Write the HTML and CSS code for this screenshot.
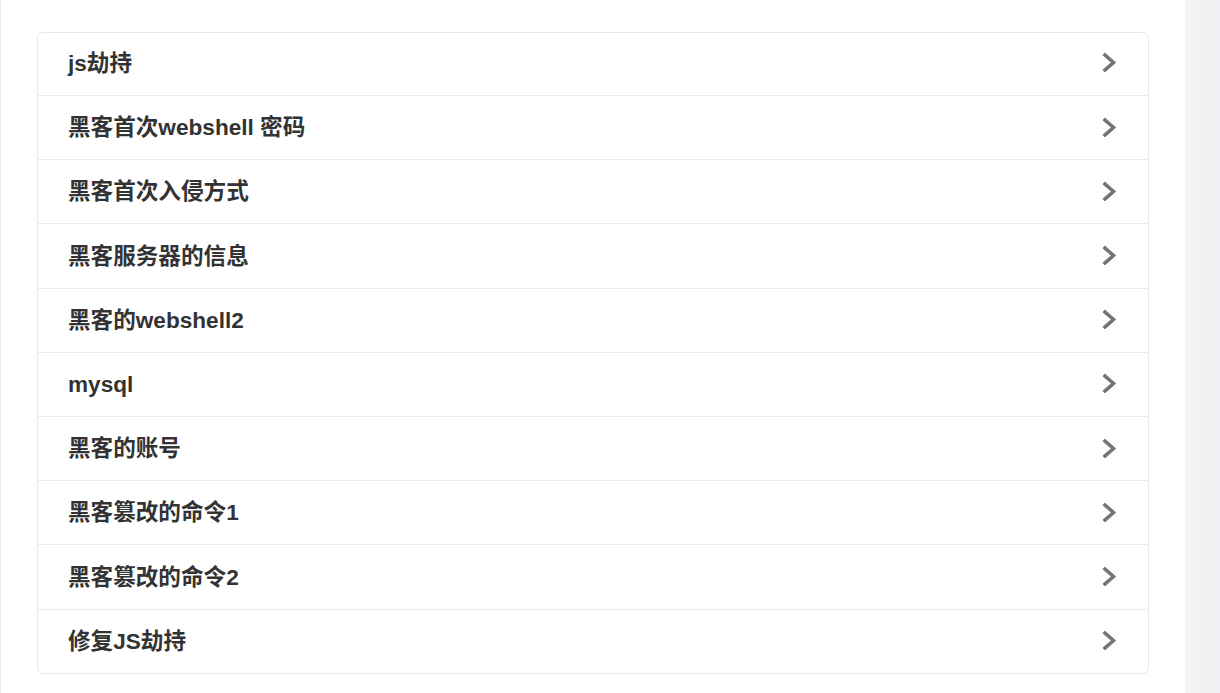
FILE: index.html
```html
<!DOCTYPE html>
<html lang="zh-CN">
<head>
<meta charset="utf-8">
<title>列表</title>
<link rel="stylesheet" href="styles.css">
</head>
<body>
<div class="page">
  <main class="main">
    <ul class="card">
      <li class="row"><span class="label">js劫持</span><svg class="chev" viewBox="0 0 18 20"><polyline points="4,3 12.5,10.5 4,18"/></svg></li>
      <li class="row"><span class="label">黑客首次webshell 密码</span><svg class="chev" viewBox="0 0 18 20"><polyline points="4,3 12.5,10.5 4,18"/></svg></li>
      <li class="row"><span class="label">黑客首次入侵方式</span><svg class="chev" viewBox="0 0 18 20"><polyline points="4,3 12.5,10.5 4,18"/></svg></li>
      <li class="row"><span class="label">黑客服务器的信息</span><svg class="chev" viewBox="0 0 18 20"><polyline points="4,3 12.5,10.5 4,18"/></svg></li>
      <li class="row"><span class="label">黑客的webshell2</span><svg class="chev" viewBox="0 0 18 20"><polyline points="4,3 12.5,10.5 4,18"/></svg></li>
      <li class="row"><span class="label">mysql</span><svg class="chev" viewBox="0 0 18 20"><polyline points="4,3 12.5,10.5 4,18"/></svg></li>
      <li class="row"><span class="label">黑客的账号</span><svg class="chev" viewBox="0 0 18 20"><polyline points="4,3 12.5,10.5 4,18"/></svg></li>
      <li class="row"><span class="label">黑客篡改的命令1</span><svg class="chev" viewBox="0 0 18 20"><polyline points="4,3 12.5,10.5 4,18"/></svg></li>
      <li class="row"><span class="label">黑客篡改的命令2</span><svg class="chev" viewBox="0 0 18 20"><polyline points="4,3 12.5,10.5 4,18"/></svg></li>
      <li class="row"><span class="label">修复JS劫持</span><svg class="chev" viewBox="0 0 18 20"><polyline points="4,3 12.5,10.5 4,18"/></svg></li>
    </ul>
  </main>
  <aside class="side"></aside>
</div>
</body>
</html>
```
FILE: styles.css
```css
html, body {
  margin: 0;
  padding: 0;
  height: 100%;
  background: #ffffff;
}
body {
  font-family: "Liberation Sans", "Noto Sans CJK SC", sans-serif;
  color: #333333;
  overflow: hidden;
}
.page {
  display: flex;
  height: 693px;
}
.main {
  flex: 0 0 1185px;
  box-sizing: border-box;
  border-left: 1px solid #ececec;
  padding: 32px 36px 0 36px;
}
.side {
  flex: 1;
  background: linear-gradient(to right, #f4f4f6, #eeeff2);
}
.card {
  list-style: none;
  margin: 0;
  padding: 0;
  border: 1px solid #e8e8e8;
  border-radius: 6px;
  background: #fff;
}
.row {
  display: flex;
  align-items: center;
  justify-content: space-between;
  box-sizing: border-box;
  height: 64.2px;
  padding: 2px 30px 0 30px;
  border-top: 1px solid #ebebeb;
}
.row:first-child {
  border-top: none;
  height: 62px;
  padding-top: 0;
}
.label {
  font-size: 22.6px;
  font-weight: 700;
  color: #333333;
  line-height: 1;
}
.chev {
  width: 18px;
  height: 20px;
  flex: 0 0 auto;
  margin-right: -1px;
  margin-bottom: 4px;
}
.chev polyline {
  fill: none;
  stroke: #757575;
  stroke-width: 3.6;
  stroke-linecap: square;
  stroke-linejoin: miter;
}
```
